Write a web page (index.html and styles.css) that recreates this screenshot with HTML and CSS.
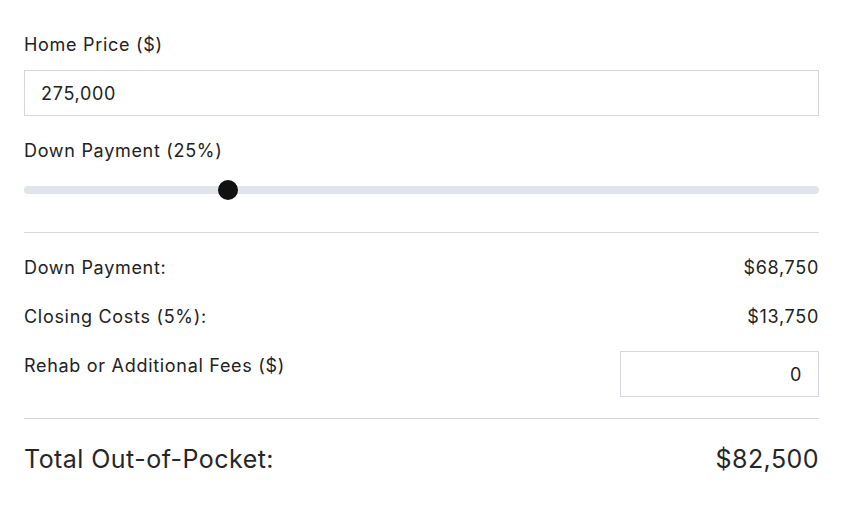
FILE: index.html
```html
<!DOCTYPE html>
<html lang="en">
<head>
<meta charset="utf-8">
<title>Out-of-Pocket Calculator</title>
<link rel="stylesheet" href="styles.css">
</head>
<body>
<div class="calc">
  <label class="field-label" for="price">Home Price ($)</label>
  <input class="text-input" id="price" type="text" value="275,000">

  <label class="field-label slider-label" for="down">Down Payment (25%)</label>
  <input class="range" id="down" type="range" min="0" max="100" value="25">

  <hr class="divider">

  <div class="row">
    <span>Down Payment:</span>
    <span>$68,750</span>
  </div>
  <div class="row">
    <span>Closing Costs (5%):</span>
    <span>$13,750</span>
  </div>
  <div class="row row-input">
    <label class="row-label" for="rehab">Rehab or Additional Fees ($)</label>
    <input class="text-input small-input" id="rehab" type="text" value="0">
  </div>

  <hr class="divider divider-bottom">

  <div class="row total">
    <span>Total Out-of-Pocket:</span>
    <span>$82,500</span>
  </div>
</div>
</body>
</html>
```
FILE: styles.css
```css
* { box-sizing: border-box; }

html, body {
  margin: 0;
  padding: 0;
  background: #ffffff;
}

body {
  font-family: Inter, "Noto Sans", sans-serif;
  color: #222222;
  letter-spacing: 0.7px;
}

.calc {
  display: flex;
  flex-direction: column;
  padding: 33px 24px 24px 24px;
}

.field-label {
  font-size: 18px;
  line-height: 24px;
  margin-bottom: 13px;
}

.slider-label {
  margin-top: 23px;
  margin-bottom: 17px;
}

.text-input {
  font-family: inherit;
  font-size: 18px;
  letter-spacing: 0.7px;
  color: #222222;
  height: 46px;
  width: 100%;
  border: 1px solid #d3d7dd;
  border-radius: 0;
  padding: 0 16px;
  background: #fff;
  outline: none;
}

.small-input {
  width: 199px;
  text-align: right;
  flex: none;
}

.range {
  -webkit-appearance: none;
  appearance: none;
  width: 100%;
  height: 20px;
  margin: 0;
  background: transparent;
}

.range::-webkit-slider-runnable-track {
  height: 8px;
  border-radius: 4px;
  background: #e1e4e8;
}

.range::-webkit-slider-thumb {
  -webkit-appearance: none;
  appearance: none;
  width: 20px;
  height: 20px;
  border-radius: 50%;
  background: #111111;
  margin-top: -6px;
  border: none;
}

.divider {
  border: none;
  border-top: 1px solid #d6d6d6;
  margin: 32px 0 23px 0;
  height: 0;
}

.divider-bottom {
  margin: 21px 0 24px 0;
}

.row {
  display: flex;
  justify-content: space-between;
  align-items: flex-start;
  font-size: 18px;
  line-height: 24px;
  margin-bottom: 25px;
}

.row + .row-input {
  margin-top: -3px;
  margin-bottom: 0;
}

.row-label {
  padding-top: 3px;
}

.total {
  font-size: 25px;
  line-height: 32px;
  letter-spacing: 0.45px;
  margin-bottom: 0;
  color: #262626;
}
```
